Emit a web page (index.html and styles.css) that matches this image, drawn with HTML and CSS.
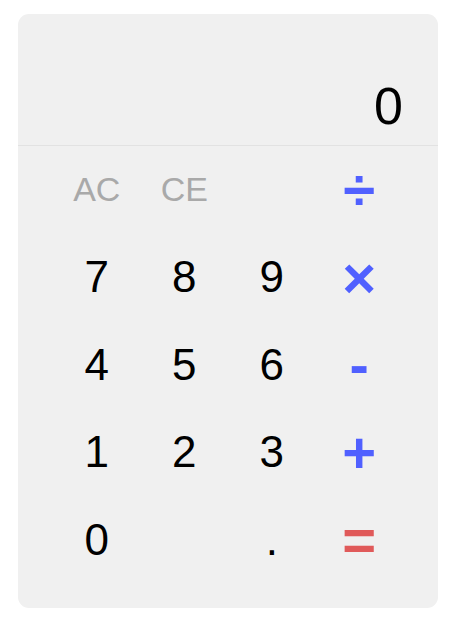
FILE: index.html
```html
<!DOCTYPE html>
<html lang="en">
<head>
<meta charset="utf-8">
<title>Calculator</title>
<link rel="stylesheet" href="styles.css">
</head>
<body>
<div class="calc">
  <div class="display"><span class="value">0</span></div>
  <div class="keys">
    <button class="key fn">AC</button>
    <button class="key fn">CE</button>
    <span class="key empty"></span>
    <button class="key op">÷</button>

    <button class="key">7</button>
    <button class="key">8</button>
    <button class="key">9</button>
    <button class="key op">×</button>

    <button class="key">4</button>
    <button class="key">5</button>
    <button class="key">6</button>
    <button class="key op">-</button>

    <button class="key">1</button>
    <button class="key">2</button>
    <button class="key">3</button>
    <button class="key op">+</button>

    <button class="key">0</button>
    <span class="key empty"></span>
    <button class="key">.</button>
    <button class="key op eq">=</button>
  </div>
</div>
</body>
</html>
```
FILE: styles.css
```css
html, body {
  margin: 0;
  padding: 0;
  background: #ffffff;
}
body {
  padding: 14px 18px;
  font-family: "Liberation Sans", Arial, sans-serif;
}
.calc {
  width: 420px;
  height: 594px;
  box-sizing: border-box;
  background: #f0f0f0;
  border-radius: 11px;
  display: flex;
  flex-direction: column;
}
.display {
  height: 132px;
  box-sizing: border-box;
  padding: 0 35px 13px 35px;
  border-bottom: 1px solid #e2e2e2;
  display: flex;
  justify-content: flex-end;
  align-items: flex-end;
}
.value {
  font-size: 52px;
  line-height: 1;
  color: #000;
}
.keys {
  display: grid;
  grid-template-columns: repeat(4, 87.5px);
  grid-auto-rows: 87.5px;
  padding: 0 35px;
}
.key {
  border: 0;
  background: transparent;
  padding: 0;
  margin: 0;
  font-family: "Liberation Sans", Arial, sans-serif;
  font-size: 44px;
  color: #000;
  display: flex;
  align-items: center;
  justify-content: center;
}
.fn {
  font-size: 34px;
  color: #a9a9a9;
}
.op {
  font-size: 58px;
  font-weight: bold;
  color: #5060ff;
}
.eq {
  color: #e05a5a;
}
```
